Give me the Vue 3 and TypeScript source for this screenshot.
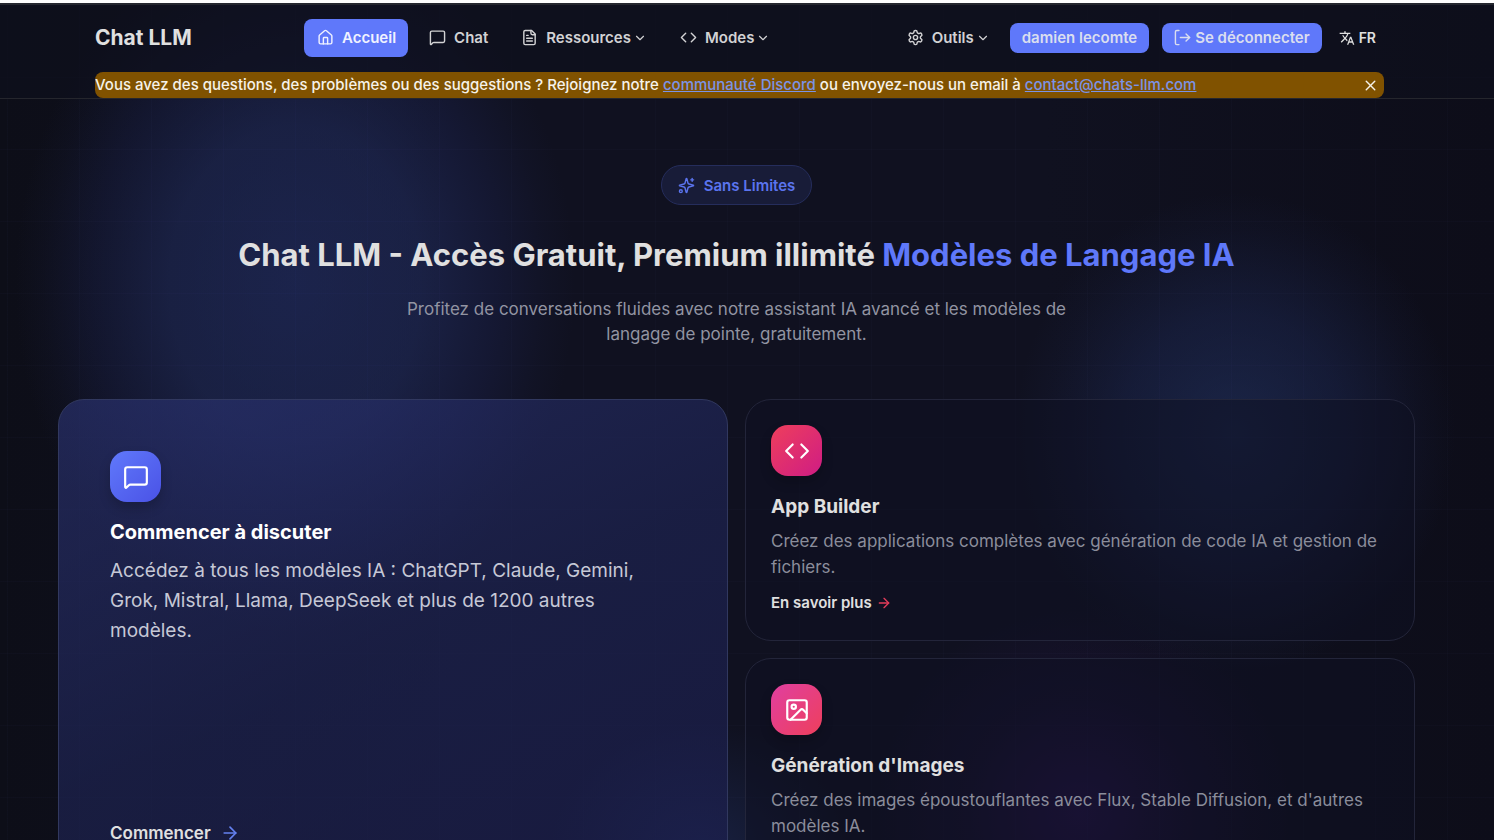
<script setup lang="ts">
import { ref } from 'vue'

interface Feature {
  id: string
  title: string
  text: string
  icon: string[]
  tone: string
}

const icons: Record<string, string[]> = {
  home: [
    'M15 21v-8a1 1 0 0 0-1-1h-4a1 1 0 0 0-1 1v8',
    'M3 10a2 2 0 0 1 .709-1.528l7-6a2 2 0 0 1 2.582 0l7 6A2 2 0 0 1 21 10v9a2 2 0 0 1-2 2H5a2 2 0 0 1-2-2z',
  ],
  chat: [
    'M22 17a2 2 0 0 1-2 2H6.828a2 2 0 0 0-1.414.586l-2.202 2.202A.71.71 0 0 1 2 21.286V5a2 2 0 0 1 2-2h16a2 2 0 0 1 2 2z',
  ],
  file: [
    'M15 2H6a2 2 0 0 0-2 2v16a2 2 0 0 0 2 2h12a2 2 0 0 0 2-2V7Z',
    'M14 2v4a2 2 0 0 0 2 2h4',
    'M10 9H8',
    'M16 13H8',
    'M16 17H8',
  ],
  code: ['M16 18l6-6-6-6', 'M8 6l-6 6 6 6'],
  chevron: ['M6 9l6 6 6-6'],
  gear: [
    'M12.22 2h-.44a2 2 0 0 0-2 2v.18a2 2 0 0 1-1 1.73l-.43.25a2 2 0 0 1-2 0l-.15-.08a2 2 0 0 0-2.73.73l-.22.38a2 2 0 0 0 .73 2.73l.15.1a2 2 0 0 1 1 1.72v.51a2 2 0 0 1-1 1.74l-.15.09a2 2 0 0 0-.73 2.73l.22.38a2 2 0 0 0 2.73.73l.15-.08a2 2 0 0 1 2 0l.43.25a2 2 0 0 1 1 1.73V20a2 2 0 0 0 2 2h.44a2 2 0 0 0 2-2v-.18a2 2 0 0 1 1-1.73l.43-.25a2 2 0 0 1 2 0l.15.08a2 2 0 0 0 2.73-.73l.22-.39a2 2 0 0 0-.73-2.73l-.15-.08a2 2 0 0 1-1-1.74v-.5a2 2 0 0 1 1-1.74l.15-.09a2 2 0 0 0 .73-2.73l-.22-.38a2 2 0 0 0-2.73-.73l-.15.08a2 2 0 0 1-2 0l-.43-.25a2 2 0 0 1-1-1.73V4a2 2 0 0 0-2-2z',
    'M15 12a3 3 0 1 1-6 0a3 3 0 1 1 6 0',
  ],
  logout: ['M7 22H4a2 2 0 0 1-2-2V4a2 2 0 0 1 2-2h3', 'M9 12h13', 'M17 17l5-5-5-5'],
  close: ['M18 6L6 18', 'M6 6l12 12'],
  sparkles: [
    'M9.937 15.5A2 2 0 0 0 8.5 14.063l-6.135-1.582a.5.5 0 0 1 0-.962L8.5 9.936A2 2 0 0 0 9.937 8.5l1.582-6.135a.5.5 0 0 1 .963 0L14.063 8.5A2 2 0 0 0 15.5 9.937l6.135 1.581a.5.5 0 0 1 0 .964L15.5 14.063a2 2 0 0 0-1.437 1.437l-1.582 6.135a.5.5 0 0 1-.963 0z',
    'M20 2v4',
    'M22 4h-4',
    'M6 20a2 2 0 1 1-4 0a2 2 0 1 1 4 0',
  ],
  arrow: ['M5 12h14', 'M12 5l7 7-7 7'],
  image: [
    'M5 3h14a2 2 0 0 1 2 2v14a2 2 0 0 1-2 2H5a2 2 0 0 1-2-2V5a2 2 0 0 1 2-2z',
    'M11 9a2 2 0 1 1-4 0a2 2 0 1 1 4 0',
    'M21 15l-3.086-3.086a2 2 0 0 0-2.828 0L6 21',
  ],
}

const menu = [
  { label: 'Ressources', icon: icons.file },
  { label: 'Modes', icon: icons.code },
]

const features: Feature[] = [
  {
    id: 'builder',
    title: 'App Builder',
    text: 'Créez des applications complètes avec génération de code IA et gestion de fichiers.',
    icon: icons.code,
    tone: 'rose',
  },
  {
    id: 'images',
    title: "Génération d'Images",
    text: "Créez des images époustouflantes avec Flux, Stable Diffusion, et d'autres modèles IA.",
    icon: icons.image,
    tone: 'pink',
  },
]

const noticeOpen = ref(true)
</script>

<template>
  <div class="page">
    <header class="header">
      <div class="bar">
        <a class="logo" href="#">Chat LLM</a>
        <nav class="nav">
          <a class="item active" href="#">
            <svg class="icon" viewBox="0 0 24 24"><path v-for="d in icons.home" :key="d" :d="d" /></svg>
            Accueil
          </a>
          <a class="item" href="#chat">
            <svg class="icon" viewBox="0 0 24 24"><path v-for="d in icons.chat" :key="d" :d="d" /></svg>
            Chat
          </a>
          <button v-for="m in menu" :key="m.label" class="item" type="button">
            <svg class="icon" viewBox="0 0 24 24"><path v-for="d in m.icon" :key="d" :d="d" /></svg>
            {{ m.label }}
            <svg class="icon chevron" viewBox="0 0 24 24"><path v-for="d in icons.chevron" :key="d" :d="d" /></svg>
          </button>
        </nav>
        <div class="account">
          <button class="item" type="button">
            <svg class="icon" viewBox="0 0 24 24"><path v-for="d in icons.gear" :key="d" :d="d" /></svg>
            Outils
            <svg class="icon chevron" viewBox="0 0 24 24"><path v-for="d in icons.chevron" :key="d" :d="d" /></svg>
          </button>
          <button class="pill" type="button">damien lecomte</button>
          <button class="pill" type="button">
            <svg class="icon" viewBox="0 0 24 24"><path v-for="d in icons.logout" :key="d" :d="d" /></svg>
            Se déconnecter
          </button>
          <button class="lang" type="button">
            <svg class="glyph" viewBox="0 0 24 24">
              <path
                d="M12.87 15.07l-2.54-2.51.03-.03c1.74-1.94 2.98-4.17 3.71-6.53H17V4h-7V2H8v2H1v1.99h11.17C11.5 7.92 10.44 9.75 9 11.35 8.07 10.32 7.3 9.19 6.69 8h-2c.73 1.63 1.73 3.17 2.98 4.56l-5.09 5.02L4 19l5-5 3.11 3.11.76-2.04zM18.5 10h-2L12 22h2l1.12-3h4.75L21 22h2l-4.5-12zm-2.62 7l1.62-4.33L19.12 17h-3.24z"
              />
            </svg>
            FR
          </button>
        </div>
      </div>
      <div v-if="noticeOpen" class="notice">
        <p>
          Vous avez des questions, des problèmes ou des suggestions ? Rejoignez notre
          <a href="#discord">communauté Discord</a> ou envoyez-nous un email à
          <a href="mailto:contact@chats-llm.com">contact@chats-llm.com</a>
        </p>
        <button class="close" type="button" aria-label="Fermer" @click="noticeOpen = false">
          <svg class="icon" viewBox="0 0 24 24"><path v-for="d in icons.close" :key="d" :d="d" /></svg>
        </button>
      </div>
    </header>

    <main class="main">
      <section class="hero">
        <span class="badge">
          <svg class="icon" viewBox="0 0 24 24"><path v-for="d in icons.sparkles" :key="d" :d="d" /></svg>
          Sans Limites
        </span>
        <h1>Chat LLM - Accès Gratuit, Premium illimité <span>Modèles de Langage IA</span></h1>
        <p>
          Profitez de conversations fluides avec notre assistant IA avancé et les modèles de langage
          de pointe, gratuitement.
        </p>
      </section>

      <section class="cards">
        <article class="card large">
          <div class="tile blue">
            <svg class="icon" viewBox="0 0 24 24"><path v-for="d in icons.chat" :key="d" :d="d" /></svg>
          </div>
          <h2>Commencer à discuter</h2>
          <p>
            Accédez à tous les modèles IA : ChatGPT, Claude, Gemini, Grok, Mistral, Llama, DeepSeek et
            plus de 1200 autres modèles.
          </p>
          <a class="more" href="#chat">
            Commencer
            <svg class="icon" viewBox="0 0 24 24"><path v-for="d in icons.arrow" :key="d" :d="d" /></svg>
          </a>
        </article>
        <article v-for="f in features" :key="f.id" class="card">
          <div class="tile" :class="f.tone">
            <svg class="icon" viewBox="0 0 24 24"><path v-for="d in f.icon" :key="d" :d="d" /></svg>
          </div>
          <h2>{{ f.title }}</h2>
          <p>{{ f.text }}</p>
          <a class="more" :href="'#' + f.id">
            En savoir plus
            <svg class="icon" viewBox="0 0 24 24"><path v-for="d in icons.arrow" :key="d" :d="d" /></svg>
          </a>
        </article>
      </section>
    </main>
  </div>
</template>

<style>
html {
  scrollbar-width: none;
  background: #0c0d18;
}
</style>

<style scoped>
.page {
  box-sizing: border-box;
  min-height: 100vh;
  border-top: 3px solid #fdfdfd;
  color: #e0e0e0;
  font-family: Inter, 'Liberation Sans', sans-serif;
  background:
    linear-gradient(90deg, rgba(120, 140, 255, 0.02) 1px, transparent 1px) 7px 0 / 72px 72px,
    linear-gradient(rgba(120, 140, 255, 0.02) 1px, transparent 1px) 0 2px / 72px 72px,
    radial-gradient(ellipse 280px 350px at 295px 280px, rgba(38, 52, 115, 0.54), rgba(38, 52, 112, 0.46) 45%, rgba(34, 44, 105, 0.26) 72%, rgba(34, 44, 100, 0.08) 90%, transparent),
    radial-gradient(ellipse 220px 240px at 1235px 430px, rgba(38, 58, 112, 0.5), rgba(34, 50, 104, 0.34) 50%, rgba(34, 48, 100, 0.09) 85%, transparent),
    radial-gradient(ellipse 210px 210px at 1080px 810px, rgba(58, 22, 110, 0.5), rgba(46, 20, 86, 0.24) 55%, transparent),
    radial-gradient(ellipse 150px 130px at 700px 850px, rgba(40, 64, 130, 0.34), transparent),
    linear-gradient(90deg, #0d0e18, #101120 30%, #101120 70%, #0d0d19);
}
a {
  color: inherit;
  text-decoration: none;
}
button {
  margin: 0;
  border: 0;
  background: none;
  color: inherit;
  font: inherit;
  cursor: pointer;
}
h1,
h2,
p {
  margin: 0;
}
.icon {
  flex: none;
  width: 17px;
  height: 17px;
  fill: none;
  stroke: currentColor;
  stroke-width: 2;
  stroke-linecap: round;
  stroke-linejoin: round;
}
.header {
  padding: 0 110px 0 95px;
  border-top: 2px solid #24262e;
  border-bottom: 1px solid #25262d;
  background: rgba(14, 15, 28, 0.7);
}
.bar {
  display: flex;
  align-items: center;
  height: 65px;
  padding-right: 8px;
}
.logo {
  width: 209px;
  font-size: 21px;
  font-weight: 700;
}
.nav,
.account {
  display: flex;
  align-items: center;
  gap: 8px;
}
.account {
  margin-left: auto;
  gap: 13px;
}
.item {
  display: flex;
  align-items: center;
  gap: 8px;
  height: 38px;
  padding: 0 12px 0 13px;
  border-radius: 8px;
  font-size: 15px;
  font-weight: 600;
  color: #d2d2d4;
}
.account .item {
  padding: 0 7px;
}
.active {
  background: #5f78fa;
  color: #f0f2ff;
}
.chevron {
  width: 14px;
  height: 14px;
  margin-left: -6px;
}
.pill {
  display: flex;
  align-items: center;
  gap: 4px;
  height: 30px;
  padding: 0 12px;
  border-radius: 8px;
  background: #5f78fa;
  color: #dadeef;
  font-size: 15px;
  font-weight: 600;
}
.lang {
  display: flex;
  align-items: center;
  gap: 4px;
  padding: 0 0 0 4px;
  font-size: 14px;
  font-weight: 600;
}
.glyph {
  width: 16px;
  height: 16px;
  fill: currentColor;
}
.notice {
  box-sizing: border-box;
  display: flex;
  align-items: center;
  justify-content: space-between;
  height: 26px;
  margin-top: 2px;
  padding-bottom: 2px;
  border-radius: 8px;
  background: #805200;
  color: #f6f2ea;
  font-size: 15px;
  font-weight: 500;
}
.notice a {
  color: #7b93e6;
  text-decoration: underline;
}
.close {
  display: flex;
  padding: 2px 5px 0;
}
.main {
  padding: 66px 79px 32px 58px;
}
.hero {
  display: flex;
  flex-direction: column;
  align-items: center;
  text-align: center;
}
.badge {
  box-sizing: border-box;
  display: flex;
  align-items: center;
  gap: 9px;
  height: 40px;
  padding: 0 16px;
  border: 1px solid #252d5c;
  border-radius: 20px;
  background: #181c38;
  color: #5b74ee;
  font-size: 15px;
  font-weight: 600;
}
.hero h1 {
  margin-top: 28px;
  font-size: 31px;
  line-height: 44px;
  font-weight: 700;
}
.hero h1 span {
  color: #5f78fa;
}
.hero p {
  max-width: 700px;
  margin-top: 20px;
  color: #9294a2;
  font-size: 17px;
  line-height: 25px;
}
.cards {
  display: grid;
  grid-template-columns: 1fr 1fr;
  gap: 17px;
  margin-top: 52px;
}
.card {
  display: flex;
  flex-direction: column;
  align-items: flex-start;
  padding: 25px 25px 26px;
  border: 1px solid #23253a;
  border-radius: 26px;
  background: rgba(15, 17, 34, 0.55);
}
.large {
  grid-row: span 2;
  padding: 51px 51px 53px;
  border-color: #31385f;
  background: linear-gradient(155deg, rgba(42, 50, 112, 0.66), rgba(30, 36, 84, 0.66) 50%, rgba(28, 30, 78, 0.66));
}
.tile {
  display: flex;
  align-items: center;
  justify-content: center;
  width: 51px;
  height: 51px;
  border-radius: 17px;
  color: #fff;
  box-shadow: 0 6px 12px rgba(0, 0, 0, 0.2);
}
.tile .icon {
  width: 26px;
  height: 26px;
}
.blue {
  background: linear-gradient(135deg, #6079fb, #4a52e6);
}
.rose {
  background: linear-gradient(135deg, #ee3f5c, #cf1c84);
}
.pink {
  background: linear-gradient(135deg, #e03fa0, #ee3f5c);
}
.card h2 {
  margin-top: 17px;
  font-size: 19px;
  line-height: 28px;
  font-weight: 700;
}
.card p {
  margin-top: 7px;
  color: #8b8d9b;
  font-size: 17px;
  line-height: 26px;
}
.card.large h2 {
  margin-top: 16px;
  color: #fff;
  font-size: 20px;
}
.card.large p {
  max-width: 550px;
  margin-top: 10px;
  color: #c6c8d6;
  font-size: 19px;
  line-height: 30px;
}
.more {
  display: flex;
  align-items: center;
  gap: 4px;
  margin-top: 12px;
  font-size: 15px;
  line-height: 22px;
  font-weight: 600;
}
.more .icon {
  width: 16px;
  height: 16px;
  color: #e23c5a;
}
.large .more {
  gap: 9px;
  margin-top: auto;
  font-size: 17px;
  line-height: 26px;
}
.large .more .icon {
  width: 20px;
  height: 20px;
  color: #6481f0;
}
</style>
